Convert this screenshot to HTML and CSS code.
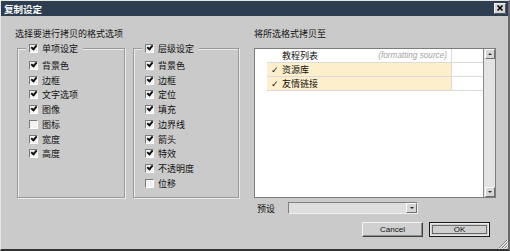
FILE: index.html
```html
<!DOCTYPE html>
<html lang="zh-CN">
<head>
    <meta charset="UTF-8">
    <title>复制设定</title>
    <link rel="stylesheet" href="styles.css">
</head>
<body>
    <div class="dialog">
        <div class="titlebar">
            <span class="title">复制设定</span>
            <svg class="close" width="12" height="11" viewBox="0 0 12 11">
                <rect x="0.5" y="0.5" width="11" height="10" fill="#d6d6d6" stroke="#f4f4f4"/>
                <path d="M11.5 0.5 V10.5 H0.5" fill="none" stroke="#555"/>
                <path d="M3.5 2.5 L8.5 7.5 M8.5 2.5 L3.5 7.5" stroke="#000" stroke-width="1.6"/>
            </svg>
        </div>

        <div class="main">
            <div class="left">
                <div class="caption">选择要进行拷贝的格式选项</div>
                <div class="groups">
                    <fieldset class="group">
                        <legend><span class="cb on"></span>单项设定</legend>
                        <div class="item"><span class="cb on"></span>背景色</div>
                        <div class="item"><span class="cb on"></span>边框</div>
                        <div class="item"><span class="cb on"></span>文字选项</div>
                        <div class="item"><span class="cb on"></span>图像</div>
                        <div class="item"><span class="cb"></span>图标</div>
                        <div class="item"><span class="cb on"></span>宽度</div>
                        <div class="item"><span class="cb on"></span>高度</div>
                    </fieldset>
                    <fieldset class="group narrow">
                        <legend><span class="cb on"></span>层级设定</legend>
                        <div class="item"><span class="cb on"></span>背景色</div>
                        <div class="item"><span class="cb on"></span>边框</div>
                        <div class="item"><span class="cb on"></span>定位</div>
                        <div class="item"><span class="cb on"></span>填充</div>
                        <div class="item"><span class="cb on"></span>边界线</div>
                        <div class="item"><span class="cb on"></span>箭头</div>
                        <div class="item"><span class="cb on"></span>特效</div>
                        <div class="item"><span class="cb on"></span>不透明度</div>
                        <div class="item"><span class="cb"></span>位移</div>
                    </fieldset>
                </div>
            </div>

            <div class="right">
                <div class="caption">将所选格式拷贝至</div>
                <div class="listbox">
                    <div class="rows">
                        <div class="row">
                            <span class="name"><span class="mark"></span>教程列表<i class="note">(formatting source)</i></span>
                            <span class="extra"></span>
                        </div>
                        <div class="row sel">
                            <span class="name"><span class="mark">✓</span>资源库</span>
                            <span class="extra"></span>
                        </div>
                        <div class="row sel">
                            <span class="name"><span class="mark">✓</span>友情链接</span>
                            <span class="extra"></span>
                        </div>
                    </div>
                    <div class="scrollbar">
                        <span class="sb-btn up"></span>
                        <span class="sb-btn down"></span>
                    </div>
                </div>

                <div class="preset">
                    <span class="preset-label">预设</span>
                    <div class="combo"><span class="combo-btn"></span></div>
                </div>

                <div class="buttons">
                    <button>Cancel</button>
                    <button class="default">OK</button>
                </div>
            </div>
        </div>

        <div class="footer">
            <svg class="grip" width="10" height="10" viewBox="0 0 10 10">
                <path d="M9 1 L1 9 M9 4 L4 9 M9 7 L7 9" stroke="#808080"/>
                <path d="M10 1 L1 10 M10 4 L4 10 M10 7 L7 10" stroke="#f4f4f4"/>
            </svg>
        </div>
    </div>
</body>
</html>
```

FILE: styles.css
```css
body {
    margin: 0;
    font-family: "Noto Sans CJK SC", sans-serif;
    font-size: 9px;
    color: #111;
}

.dialog {
    width: 510px;
    height: 251px;
    box-sizing: border-box;
    display: flex;
    flex-direction: column;
    background: #cacaca;
    border-top: 1px solid #e6e6e6;
    border-left: 1px solid #e6e6e6;
    border-right: 2px solid #6a6a6a;
    border-bottom: 2px solid #333;
}

.titlebar {
    height: 15px;
    flex: none;
    background: #2c3e50;
    display: flex;
    align-items: center;
    justify-content: space-between;
    padding: 0 2px 0 3px;
}

.title {
    color: #fff;
    font-weight: bold;
    font-size: 9.5px;
}

.main {
    flex: 1;
    display: flex;
    padding-top: 11px;
}

.caption {
    height: 14px;
    line-height: 14px;
}

/* left side: option groups */
.left {
    width: 253px;
    padding-left: 14px;
    box-sizing: border-box;
}

.left .caption {
    margin-bottom: 1px;
}

.groups {
    display: flex;
    gap: 8px;
    margin-left: 2px;
}

.group {
    margin: 0;
    padding: 3px 0 0 11px;
    width: 108px;
    height: 156px;
    box-sizing: border-box;
    border: 1px solid #9a9a9a;
    box-shadow: inset 1px 1px 0 #ececec, 1px 1px 0 #ececec;
}

.group.narrow {
    width: 106px;
}

.group legend {
    display: flex;
    align-items: center;
    line-height: 13px;
    padding: 0 5px 0 3px;
    margin-left: -3px;
    background: #cacaca;
}

.item {
    display: flex;
    align-items: center;
    height: 14.75px;
}

.cb {
    position: relative;
    flex: none;
    width: 9px;
    height: 9px;
    box-sizing: border-box;
    margin-right: 4px;
    border: 1px solid;
    border-color: #7a7a7a #fff #fff #7a7a7a;
    background: #f2f2f2;
}

.cb.on::after {
    content: "";
    position: absolute;
    left: 2px;
    top: -1px;
    width: 2px;
    height: 4px;
    border: solid #111;
    border-width: 0 2px 2px 0;
    transform: rotate(40deg);
}

/* right side: target list */
.right {
    width: 242px;
}

.right .caption {
    margin-bottom: 7px;
}

.listbox {
    height: 150px;
    box-sizing: border-box;
    border: 1px solid #7c7c7c;
    background: #fff;
    display: flex;
}

.rows {
    flex: 1;
}

.row {
    display: flex;
    height: 14px;
    box-sizing: border-box;
    margin-left: 12px;
    border-bottom: 1px solid #dadada;
}

.name {
    width: 184px;
    display: flex;
    align-items: center;
    padding-left: 4px;
    box-sizing: border-box;
}

.row.sel .name {
    background: #fdefcb;
}

.mark {
    width: 11px;
    font-family: "DejaVu Sans", sans-serif;
    font-size: 9px;
}

.note {
    margin-left: auto;
    padding-right: 4px;
    font-family: "Liberation Sans", sans-serif;
    font-size: 8.2px;
    color: #a4a4a4;
}

.extra {
    flex: 1;
    border-left: 1px solid #dadada;
}

.scrollbar {
    width: 12px;
    box-sizing: border-box;
    background: #e3e3e3;
    border-left: 1px solid #8a8a8a;
    display: flex;
    flex-direction: column;
    justify-content: space-between;
}

.sb-btn {
    height: 10px;
    box-sizing: border-box;
    margin-left: 1px;
    border: 1px solid;
    border-color: #fff #6e6e6e #6e6e6e #fff;
    background: #d6d6d6;
    display: flex;
    align-items: center;
    justify-content: center;
}

.sb-btn::after {
    content: "";
    border-left: 2px solid transparent;
    border-right: 2px solid transparent;
}

.sb-btn.up::after {
    border-bottom: 2px solid #333;
}

.sb-btn.down::after {
    border-top: 2px solid #333;
}

.preset {
    display: flex;
    align-items: center;
    height: 12px;
    margin-top: 4px;
    padding-left: 3px;
}

.preset-label {
    width: 31px;
}

.combo {
    width: 130px;
    height: 12px;
    box-sizing: border-box;
    border: 1px solid;
    border-color: #808080 #f0f0f0 #f0f0f0 #808080;
    background: #dedede;
    display: flex;
    justify-content: flex-end;
}

.combo-btn {
    width: 11px;
    box-sizing: border-box;
    border: 1px solid;
    border-color: #fff #6e6e6e #6e6e6e #fff;
    background: #d6d6d6;
    display: flex;
    align-items: center;
    justify-content: center;
}

.combo-btn::after {
    content: "";
    border-left: 2px solid transparent;
    border-right: 2px solid transparent;
    border-top: 2px solid #222;
}

.buttons {
    display: flex;
    justify-content: flex-end;
    gap: 6px;
    margin-top: 8px;
    padding-right: 6px;
}

.buttons button {
    width: 61px;
    height: 15px;
    padding: 0;
    font-family: "Liberation Sans", sans-serif;
    font-size: 8px;
    color: #111;
    background: #d0d0d0;
    border: 1px solid;
    border-color: #f4f4f4 #404040 #404040 #f4f4f4;
    box-shadow: inset -1px -1px 0 #909090;
}

.buttons .default {
    border-color: #1a1a1a;
    box-shadow: inset 0 0 0 1px #eaeaea, inset 0 0 0 2px #d0d0d0, inset 0 0 0 3px #6a6a6a;
}

.footer {
    height: 10px;
    flex: none;
    display: flex;
    justify-content: flex-end;
}
```
